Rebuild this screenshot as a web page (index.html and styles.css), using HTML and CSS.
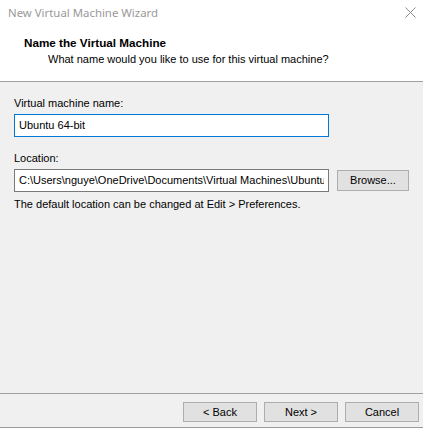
FILE: index.html
```html
<!DOCTYPE html>
<html>
<head>
<meta charset="utf-8">
<link rel="stylesheet" href="styles.css">
</head>
<body>
<div class="window">
  <div class="titlebar">
    <span class="title">New Virtual Machine Wizard</span>
    <svg class="close" width="11" height="11" viewBox="0 0 11 11"><path d="M0.5 0.5 L10.5 10.5 M10.5 0.5 L0.5 10.5" stroke="#8a8a8a" stroke-width="1" fill="none"/></svg>
  </div>
  <div class="header">
    <div class="heading">Name the Virtual Machine</div>
    <div class="subheading">What name would you like to use for this virtual machine?</div>
  </div>
  <div class="content">
    <div class="label">Virtual machine name:</div>
    <div class="field focused">Ubuntu 64-bit</div>
    <div class="label loc-label">Location:</div>
    <div class="row">
      <div class="field"><span class="field-text">C:\Users\nguye\OneDrive\Documents\Virtual Machines\Ubuntu 64-bit</span></div>
      <div class="btn browse">Browse...</div>
    </div>
    <div class="note">The default location can be changed at Edit &gt; Preferences.</div>
  </div>
  <div class="footer">
    <div class="btn">&lt; Back</div>
    <div class="btn">Next &gt;</div>
    <div class="btn">Cancel</div>
  </div>
</div>
</body>
</html>
```

FILE: styles.css
```css
html, body {
  margin: 0;
  padding: 0;
  background: #ffffff;
}
body {
  width: 423px;
  height: 431px;
  overflow: hidden;
  font-family: "Liberation Sans", Arial, sans-serif;
  font-size: 11px;
  line-height: 16px;
  color: #000;
}
.window {
  height: 427px;
  display: flex;
  flex-direction: column;
  background: #f0f0f0;
  border-bottom: 1px solid #9a9a9a;
}
.titlebar {
  height: 26px;
  background: #fff;
  display: flex;
  align-items: center;
  justify-content: space-between;
  padding: 0 7px 0 8px;
}
.title {
  color: #999;
  font-family: "Noto Sans", sans-serif;
  font-size: 11.4px;
}
.close {
  margin-top: -1px;
}
.header {
  background: #fff;
  padding: 9px 0 14px 0;
  border-bottom: 1px solid #a0a0a0;
}
.heading {
  padding-left: 24px;
  font-weight: bold;
  font-size: 11.7px;
}
.subheading {
  padding-left: 48px;
}
.content {
  flex: 1;
  padding: 13px 14px 0 14px;
  display: flex;
  flex-direction: column;
}
.label {
  margin-bottom: 3px;
}
.loc-label {
  margin-top: 13px;
}
.field {
  box-sizing: border-box;
  width: 315px;
  height: 23px;
  border: 1px solid #7a7a7a;
  background: #fff;
  padding: 0 4px;
  line-height: 21px;
  white-space: nowrap;
  overflow: hidden;
  flex-shrink: 0;
}
.field.focused {
  border-color: #0078d7;
}
.field-text {
  display: block;
  overflow: hidden;
  text-overflow: clip;
}
.row {
  display: flex;
  align-items: flex-start;
  gap: 8px;
}
.btn {
  box-sizing: border-box;
  width: 74px;
  height: 20px;
  border: 1px solid #adadad;
  background: #e1e1e1;
  text-align: center;
  line-height: 18px;
}
.browse {
  margin-top: 1px;
  height: 21px;
  line-height: 19px;
}
.note {
  margin-top: 4px;
}
.footer {
  border-top: 1px solid #a0a0a0;
  height: 34px;
  box-sizing: border-box;
  display: flex;
  justify-content: flex-end;
  gap: 7px;
  padding: 8px 4px 0 0;
}
```
